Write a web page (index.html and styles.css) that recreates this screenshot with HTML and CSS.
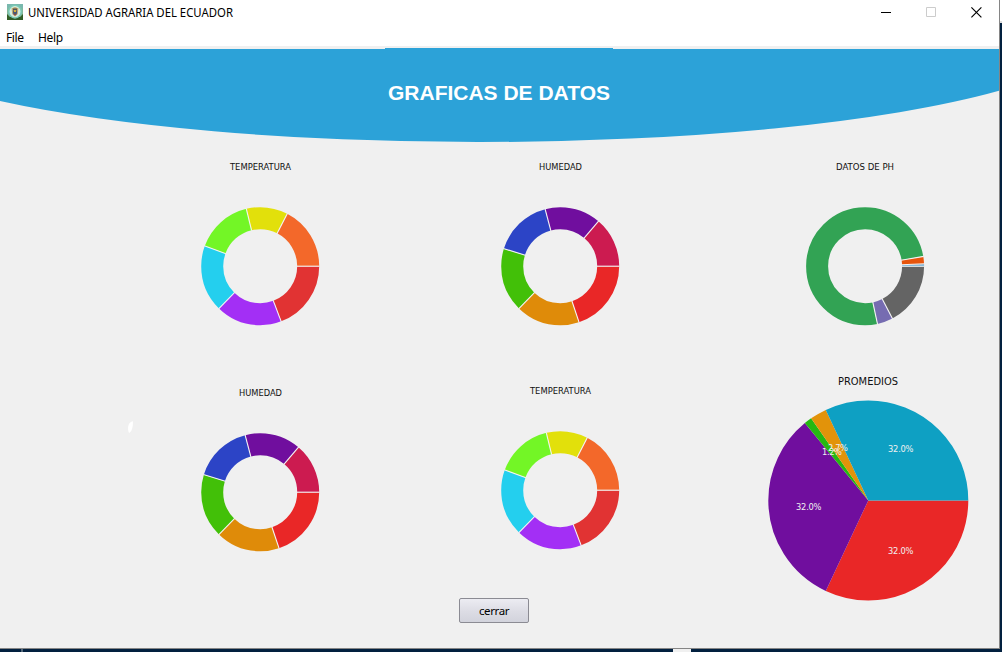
FILE: index.html
```html
<!DOCTYPE html>
<html lang="es">
<head>
<meta charset="utf-8">
<title>UNIVERSIDAD AGRARIA DEL ECUADOR</title>
<link rel="stylesheet" href="styles.css">
</head>
<body>
<svg class="defs" aria-hidden="true">
  <defs>
    <g id="temp-ring" class="ring">
      <circle r="48" pathLength="360" stroke="#e13333" stroke-dasharray="69.2 360"/>
      <circle r="48" pathLength="360" stroke="#a32ff5" stroke-dasharray="65.1 360" stroke-dashoffset="-69.2"/>
      <circle r="48" pathLength="360" stroke="#24cfee" stroke-dasharray="65.7 360" stroke-dashoffset="-134.3"/>
      <circle r="48" pathLength="360" stroke="#73f626" stroke-dasharray="56.4 360" stroke-dashoffset="-200"/>
      <circle r="48" pathLength="360" stroke="#e2e00b" stroke-dasharray="40.9 360" stroke-dashoffset="-256.4"/>
      <circle r="48" pathLength="360" stroke="#f3682a" stroke-dasharray="62.7 360" stroke-dashoffset="-297.3"/>
      <path class="cut" d="M36.5 0H59.5"/>
      <path class="cut" d="M36.5 0H59.5" transform="rotate(69.2)"/>
      <path class="cut" d="M36.5 0H59.5" transform="rotate(134.3)"/>
      <path class="cut" d="M36.5 0H59.5" transform="rotate(200)"/>
      <path class="cut" d="M36.5 0H59.5" transform="rotate(256.4)"/>
      <path class="cut" d="M36.5 0H59.5" transform="rotate(297.3)"/>
    </g>
    <g id="hum-ring" class="ring">
      <circle r="48" pathLength="360" stroke="#e92727" stroke-dasharray="71.4 360"/>
      <circle r="48" pathLength="360" stroke="#df8b09" stroke-dasharray="62.9 360" stroke-dashoffset="-71.4"/>
      <circle r="48" pathLength="360" stroke="#42c008" stroke-dasharray="63 360" stroke-dashoffset="-134.3"/>
      <circle r="48" pathLength="360" stroke="#2c44c6" stroke-dasharray="57.9 360" stroke-dashoffset="-197.3"/>
      <circle r="48" pathLength="360" stroke="#700e9e" stroke-dasharray="55.2 360" stroke-dashoffset="-255.2"/>
      <circle r="48" pathLength="360" stroke="#cc1b50" stroke-dasharray="49.6 360" stroke-dashoffset="-310.4"/>
      <path class="cut" d="M36.5 0H59.5"/>
      <path class="cut" d="M36.5 0H59.5" transform="rotate(71.4)"/>
      <path class="cut" d="M36.5 0H59.5" transform="rotate(134.3)"/>
      <path class="cut" d="M36.5 0H59.5" transform="rotate(197.3)"/>
      <path class="cut" d="M36.5 0H59.5" transform="rotate(255.2)"/>
      <path class="cut" d="M36.5 0H59.5" transform="rotate(310.4)"/>
    </g>
  </defs>
</svg>
<div class="desktop">
  <div class="window">
    <header class="titlebar">
      <svg class="crest" width="16" height="16" viewBox="0 0 16 16">
        <rect width="16" height="16" fill="#84b79a"/>
        <path d="M0 10V16H16V10L13 13H3Z" fill="#315e27"/>
        <path d="M0 0H16V5L12 2H4L0 5Z" fill="#79b8ae"/>
        <circle cx="8" cy="7.6" r="6.3" fill="#d5eee0" stroke="#79c8b5" stroke-width="1.5"/>
        <path d="M4.6 4.2L8 3L11.4 4.2L10.8 10L8 12.5L5.2 10Z" fill="#bfa873"/>
        <path d="M6 4.5H10V6H6Z" fill="#5d5145"/>
        <ellipse cx="8" cy="8.2" rx="2" ry="3" fill="#4d5973"/>
        <path d="M7 6H9V8H7Z" fill="#d9b23a"/>
        <path d="M7.2 10H9L8 12Z" fill="#a94632"/>
      </svg>
      <svg class="app-title" width="230" height="24"><text x="0" y="17" textLength="205" lengthAdjust="spacingAndGlyphs">UNIVERSIDAD AGRARIA DEL ECUADOR</text></svg>
      <div class="controls">
        <svg width="10" height="10" viewBox="0 0 10 10"><path d="M0 5.5H10" stroke="#000"/></svg>
        <svg width="10" height="10" viewBox="0 0 10 10"><path d="M.5 .5H9.5V9.5H.5Z" fill="none" stroke="#ccc"/></svg>
        <svg width="11" height="11" viewBox="0 0 11 11"><path d="M.4 .4L10.4 10.4M10.4 .4L.4 10.4" stroke="#000" stroke-width="1.15"/></svg>
      </div>
    </header>
    <nav class="menubar"><span class="file">File</span><span class="help">Help</span></nav>
    <div class="banner">
      <svg width="999" height="97" viewBox="0 46 999 97">
        <path d="M0 49H385V48H613V49H999V90.8A620 113 0 0 1 478 142A620 113 0 0 1 0 101Z" fill="#2ca2d8"/>
        <text class="heading" x="388" y="99.8" textLength="222" lengthAdjust="spacingAndGlyphs">GRAFICAS DE DATOS</text>
      </svg>
    </div>
    <main class="charts">
      <section class="column speck-column">
        <svg width="12" height="18" viewBox="124 418 12 18"><path d="M132.9 421.3C128 422 127 428.5 129 433C132.2 431.5 133.2 426 132.9 421.3Z" fill="#fff"/></svg>
      </section>
      <section class="column">
        <svg width="140" height="180" viewBox="190 155 140 180">
          <text class="chart-title" x="230" y="170" textLength="61" lengthAdjust="spacingAndGlyphs">TEMPERATURA</text>
          <use href="#temp-ring" x="260.2" y="266.2"/>
        </svg>
        <svg class="lower" width="140" height="180" viewBox="190 381 140 180">
          <text class="chart-title" x="239" y="396" textLength="43" lengthAdjust="spacingAndGlyphs">HUMEDAD</text>
          <use href="#hum-ring" x="260.2" y="492.2"/>
        </svg>
      </section>
      <section class="column middle">
        <svg width="140" height="180" viewBox="490 155 140 180">
          <text class="chart-title" x="539" y="170" textLength="43" lengthAdjust="spacingAndGlyphs">HUMEDAD</text>
          <use href="#hum-ring" x="560.2" y="266.2"/>
        </svg>
        <svg class="lower" width="140" height="180" viewBox="490 381 140 180">
          <text class="chart-title" x="530" y="394" textLength="61" lengthAdjust="spacingAndGlyphs">TEMPERATURA</text>
          <use href="#temp-ring" x="560.2" y="490.2"/>
        </svg>
      </section>
      <section class="column right">
        <svg width="210" height="180" viewBox="760 155 210 180">
          <text class="chart-title" x="836" y="170" textLength="58" lengthAdjust="spacingAndGlyphs">DATOS DE PH</text>
          <g class="ring" transform="translate(865.1 266.2)">
            <circle r="48" pathLength="360" stroke="#646464" stroke-dasharray="62.4 360"/>
            <circle r="48" pathLength="360" stroke="#766cb1" stroke-dasharray="15.5 360" stroke-dashoffset="-62.4"/>
            <circle r="48" pathLength="360" stroke="#32a354" stroke-dasharray="272.6 360" stroke-dashoffset="-77.9"/>
            <circle r="48" pathLength="360" stroke="#e6550d" stroke-dasharray="7.6 360" stroke-dashoffset="-350.5"/>
            <circle r="48" pathLength="360" stroke="#4f9fd0" stroke-dasharray="1.9 360" stroke-dashoffset="-358.1"/>
            <path class="cut" d="M36.5 0H59.5"/>
            <path class="cut" d="M36.5 0H59.5" transform="rotate(62.4)"/>
            <path class="cut" d="M36.5 0H59.5" transform="rotate(77.9)"/>
            <path class="cut" d="M36.5 0H59.5" transform="rotate(350.5)"/>
            <path class="cut" d="M36.5 0H59.5" transform="rotate(357.7)"/>
          </g>
        </svg>
        <svg class="pie" width="210" height="240" viewBox="760 370 210 240">
          <text class="pie-title" x="838" y="384.5" textLength="60" lengthAdjust="spacingAndGlyphs">PROMEDIOS</text>
          <g class="slices" transform="translate(868.3 500.4)">
            <circle r="50" pathLength="360" stroke="#e92727" stroke-dasharray="115.2 360"/>
            <circle r="50" pathLength="360" stroke="#700e9e" stroke-dasharray="115.4 360" stroke-dashoffset="-115.2"/>
            <circle r="50" pathLength="360" stroke="#25b812" stroke-dasharray="4.5 360" stroke-dashoffset="-230.6"/>
            <circle r="50" pathLength="360" stroke="#e2930a" stroke-dasharray="9.7 360" stroke-dashoffset="-235.1"/>
            <circle r="50" pathLength="360" stroke="#0ea0c3" stroke-dasharray="115.2 360" stroke-dashoffset="-244.8"/>
          </g>
          <g class="percent">
            <text x="888" y="452" textLength="25.5">32.0%</text>
            <text x="828" y="451" textLength="20">2.7%</text>
            <text x="822" y="455" textLength="20">1.2%</text>
            <text x="796" y="510" textLength="25.5">32.0%</text>
            <text x="888" y="554" textLength="25.5">32.0%</text>
          </g>
        </svg>
      </section>
    </main>
    <footer class="actions"><button class="close-button" type="button">cerrar</button></footer>
  </div>
  <div class="edge"></div>
  <div class="taskbar"><span class="divider"></span><span class="task"></span></div>
</div>
</body>
</html>
```
FILE: styles.css
```css
* { box-sizing: border-box; }
body { margin: 0; overflow: hidden; font-family: "Noto Sans", sans-serif; }
svg { display: block; flex: none; }
.defs { position: absolute; width: 0; height: 0; }
.desktop {
  display: grid;
  grid-template-columns: 1000px 2px;
  grid-template-rows: 649px 3px;
  width: 1002px;
  height: 652px;
}
.window {
  display: flex;
  flex-direction: column;
  background: #f0f0f0;
  border-right: 1px solid #858585;
  border-bottom: 1px solid #858585;
}
.edge { background: linear-gradient(#fff 0 21px, #ddd 21px 23px, #02203f 23px); }
.titlebar {
  display: flex;
  align-items: center;
  height: 24px;
  padding: 0 17px 0 7px;
  background: #fff;
}
.app-title { margin-left: 5px; font-size: 12px; }
.controls { display: flex; align-items: center; gap: 35px; margin-left: auto; }
.menubar {
  display: flex;
  height: 22px;
  padding-left: 6px;
  background: #fff;
  font-size: 12px;
  line-height: 28px;
}
.file { width: 32px; letter-spacing: -.4px; }
.help { letter-spacing: -.35px; }
.banner { height: 97px; }
.heading { font: bold 20.5px "Liberation Sans", Arial, sans-serif; fill: #fff; }
.charts { display: flex; height: 455px; padding: 12px 0 0 124px; }
.speck-column { width: 66px; padding-top: 263px; }
.middle { margin-left: 160px; }
.right { margin-left: 130px; }
.lower { margin-top: 46px; }
.pie { margin-top: 35px; }
.ring circle { fill: none; stroke-width: 22; }
.cut { stroke: #f3f3f3; stroke-width: 1.1; }
.slices circle { fill: none; stroke-width: 100; }
.chart-title { font: 8.8px "DejaVu Sans", sans-serif; fill: #111; }
.pie-title { font: 10.2px "DejaVu Sans", sans-serif; fill: #111; }
.percent { font: 8.3px "DejaVu Sans", sans-serif; fill: #f0f0f0; }
.actions { display: flex; padding-left: 459px; }
.close-button {
  width: 70px;
  height: 25px;
  padding: 0;
  border: 1px solid #8b8b93;
  border-radius: 2px;
  background: linear-gradient(#ececf2, #dcdce4 55%, #d2d3dc);
  color: #000;
  font: 11.5px/22px "Noto Sans", sans-serif;
  letter-spacing: -.4px;
}
.taskbar {
  display: flex;
  grid-column: 1 / 3;
  background: #02203f;
}
.divider { width: 2px; margin-left: 21px; background: #52677a; }
.task { width: 18px; margin-left: 650px; background: #f0f0f0; }
```
